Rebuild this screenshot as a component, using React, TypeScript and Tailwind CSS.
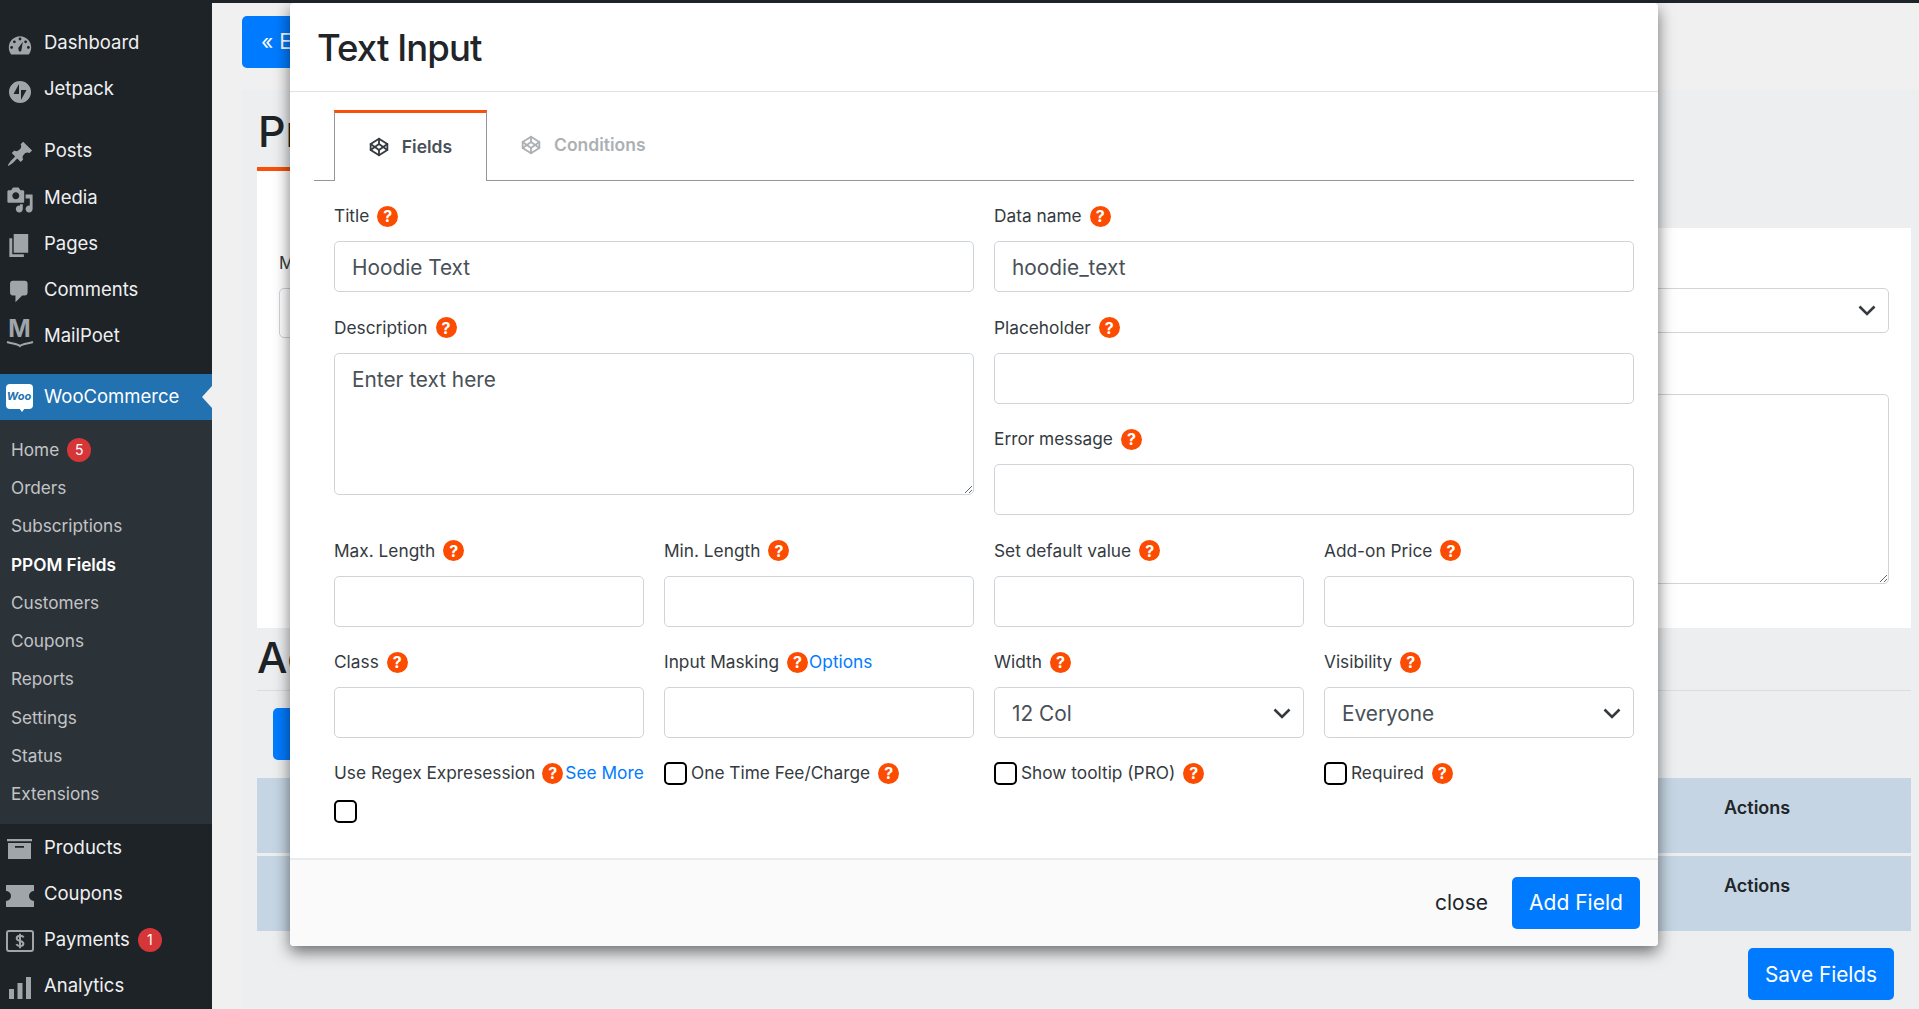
import { Codepen } from "lucide-react"
import type { ReactNode } from "react"

const icons: Record<string, ReactNode> = {
  dashboard: (
    <svg viewBox="0 0 20 20" className="w-[28px] h-[28px] mt-[5px] fill-[#a0a5aa]">
      <path fillRule="evenodd" d="M3.76 16h12.48c1.1-1.37 1.76-3.11 1.76-5 0-4.42-3.58-8-8-8s-8 3.58-8 8c0 1.89.66 3.63 1.76 5zM10 4c.55 0 1 .45 1 1s-.45 1-1 1-1-.45-1-1 .45-1 1-1zM6 6c.55 0 1 .45 1 1s-.45 1-1 1-1-.45-1-1 .45-1 1-1zm8 0c.55 0 1 .45 1 1s-.45 1-1 1-1-.45-1-1 .45-1 1-1zm-5.37 5.55L12 7l-1 6c-.1.55-.45 1-1 1s-1-.45-1-1c0-.57.24-1.08-.37-1.45zM4 10c.55 0 1 .45 1 1s-.45 1-1 1-1-.45-1-1 .45-1 1-1zm12 0c.55 0 1 .45 1 1s-.45 1-1 1-1-.45-1-1 .45-1 1-1z" />
    </svg>
  ),
  jetpack: (
    <svg viewBox="0 0 22 22" className="w-[22px] h-[22px] mt-[5px] fill-[#a0a5aa]">
      <path fillRule="evenodd" d="M11 0a11 11 0 1 0 0 22 11 11 0 0 0 0-22zM10 3v10H4.500zM12 19V9h5.500z" />
    </svg>
  ),
  posts: (
    <svg viewBox="0 0 20 20" className="w-[28px] h-[28px] mt-[5px] fill-[#a0a5aa]">
      <path d="M10.44 3.02l1.82-1.82 6.36 6.35-1.83 1.82c-1.05-.68-2.48-.57-3.41.36l-.75.75c-.92.93-1.04 2.35-.35 3.41l-1.83 1.82-2.41-2.41-2.8 2.79c-.42.42-3.38 2.71-3.8 2.29s1.86-3.39 2.28-3.81l2.79-2.79L4.1 9.36l1.83-1.82c1.05.69 2.48.57 3.4-.36l.75-.75c.93-.92 1.05-2.35.36-3.41z" />
    </svg>
  ),
  media: (
    <svg viewBox="0 0 20 20" className="w-[28px] h-[28px] mt-[5px] fill-[#a0a5aa]">
      <path fillRule="evenodd" d="M13 11V4c0-.55-.45-1-1-1h-1.670L9 1H5L3.670 3H2c-.55 0-1 .45-1 1v7c0 .55.45 1 1 1h10c.55 0 1-.45 1-1zM7 4.500c1.380 0 2.500 1.120 2.500 2.500S8.380 9.500 7 9.500 4.500 8.380 4.500 7 5.620 4.500 7 4.500zM14 6h5v10.500c0 1.380-1.120 2.500-2.500 2.500S14 17.880 14 16.500s1.120-2.500 2.500-2.500c.17 0 .34.02.5.05V9h-3V6zm-4 8.050V13h2v3.500c0 1.380-1.120 2.500-2.500 2.500S7 17.880 7 16.500 8.120 14 9.500 14c.17 0 .34.02.5.05z" />
    </svg>
  ),
  pages: (
    <svg viewBox="0 0 20 20" className="w-[29px] h-[29px] mt-[4px] fill-[#a0a5aa]">
      <path d="M6 15V2h10v13H6zm-1 1h8v2H3V5h2v11z" />
    </svg>
  ),
  comments: (
    <svg viewBox="0 0 20 20" className="w-[27px] h-[27px] mt-[4px] fill-[#a0a5aa]">
      <path d="M5 2h9c1.100 0 2 .9 2 2v7c0 1.100-.9 2-2 2h-2l-5 5v-5H5c-1.100 0-2-.9-2-2V4c0-1.100.9-2 2-2z" />
    </svg>
  ),
  mailpoet: (
    <span className="relative flex flex-col items-center w-[28px] h-[32px] -mt-[4px]">
      <span className="text-[#a0a5aa] text-[24px] leading-[22px] font-bold">M</span>
      <svg viewBox="0 0 28 8" className="w-[28px] h-[8px] stroke-[#a0a5aa] fill-none" strokeWidth={2}>
        <path d="M1 2c5 2 10 1 13 4 3-3 8-2 13-4" />
      </svg>
    </span>
  ),
  woo: (
    <span className="relative flex items-center justify-center w-[27px] h-[25px] -mt-[1px] bg-white rounded-[4px] text-[#2271b1] text-[11px] font-bold italic leading-none">
      Woo
      <span className="absolute -bottom-[3px] left-[13px] w-0 h-0 border-l-[3px] border-r-[3px] border-t-[4px] border-l-transparent border-r-transparent border-t-white" />
    </span>
  ),
  products: (
    <svg viewBox="0 0 25 20" className="w-[25px] h-[20px] mt-[3px] fill-[#a0a5aa]">
      <path fillRule="evenodd" d="M0 0h25v2.300H0zM1 4h23v16H1zM8 7v1.800h9V7z" />
    </svg>
  ),
  coupons: (
    <svg viewBox="0 0 28 24" className="w-[28px] h-[24px] mt-[4px] fill-[#a0a5aa]">
      <path d="M0 1h28v6a5 5 0 0 0 0 10v6H0v-6a5 5 0 0 0 0-10z" />
    </svg>
  ),
  payments: (
    <svg viewBox="0 0 28 22" className="w-[28px] h-[22px] mt-[2px] fill-none stroke-[#a0a5aa]" strokeWidth={2}>
      <rect x="1" y="1" width="26" height="20" rx="2" />
      <path d="M17.500 7.500c-.5-1.300-2-1.800-3.500-1.800-1.800 0-3.300.9-3.300 2.500s1.500 2.300 3.300 2.700 3.400 1 3.400 2.700-1.600 2.500-3.400 2.500c-1.600 0-3-.6-3.600-1.900M14 3.800v14.400" />
    </svg>
  ),
  analytics: (
    <svg viewBox="0 0 22 22" className="w-[22px] h-[22px] mt-[4px] fill-[#a0a5aa]">
      <path d="M0 12h5v10H0zM8.500 6h5v16h-5zM17 0h5v22h-5z" />
    </svg>
  ),
}

const topItems = [
  ["dashboard", "Dashboard"],
  ["jetpack", "Jetpack"],
  null,
  ["posts", "Posts"],
  ["media", "Media"],
  ["pages", "Pages"],
  ["comments", "Comments"],
  ["mailpoet", "MailPoet"],
]

const subItems = [
  "Home",
  "Orders",
  "Subscriptions",
  "PPOM Fields",
  "Customers",
  "Coupons",
  "Reports",
  "Settings",
  "Status",
  "Extensions",
]

function Badge({ n }: { n: number }) {
  return (
    <span className="ml-[8px] w-[24px] h-[24px] rounded-full bg-[#d63638] text-white text-[14px] flex items-center justify-center">
      {n}
    </span>
  )
}

function MenuRow({ icon, label, badge }: { icon: string; label: string; badge?: number }) {
  return (
    <div className="h-[46.600px] flex items-center text-[#f0f0f1] text-[18.500px]">
      <span className="w-[44px] shrink-0 flex justify-center pl-[1px] pr-[6px]">{icons[icon]}</span>
      <span>{label}</span>
      {badge ? <Badge n={badge} /> : null}
    </div>
  )
}

function Sidebar() {
  return (
    <aside className="w-[212px] shrink-0 bg-[#1d2327] flex flex-col pt-[17px]">
      {topItems.map((it, i) =>
        it ? (
          <MenuRow key={i} icon={it[0]} label={it[1]} />
        ) : (
          <div key={i} className="h-[16px]" />
        )
      )}
      <div className="h-[15px]" />
      <div className="relative h-[47px] bg-[#2271b1] flex items-center text-white text-[18.500px]">
        <span className="w-[44px] shrink-0 flex justify-center pr-[6px]">{icons.woo}</span>
        <span>WooCommerce</span>
        <span className="absolute right-0 top-[12px] w-0 h-0 border-y-[11px] border-r-[10px] border-y-transparent border-r-[#f0f0f1]" />
      </div>
      <div className="bg-[#2c3338] pt-[10px] pb-[11px]">
        {subItems.map((s, i) => (
          <div
            key={s}
            className={`h-[38.300px] pl-[11px] flex items-center text-[17.200px] ${
              s === "PPOM Fields" ? "font-semibold text-white" : "text-[#c3c4c7]"
            }`}
          >
            {s}
            {i === 0 ? <Badge n={5} /> : null}
          </div>
        ))}
      </div>
      <MenuRow icon="products" label="Products" />
      <MenuRow icon="coupons" label="Coupons" />
      <MenuRow icon="payments" label="Payments" badge={1} />
      <MenuRow icon="analytics" label="Analytics" />
    </aside>
  )
}

function Help({ className = "" }: { className?: string }) {
  return (
    <span
      className={`inline-flex w-[21px] h-[21px] shrink-0 rounded-full bg-[#fb4c02] text-white text-[16px] font-bold items-center justify-center leading-none ${className}`}
    >
      ?
    </span>
  )
}

function Label({ text, link }: { text: string; link?: string }) {
  return (
    <div className="h-[24px] pt-[2px] mb-[14px] flex items-center whitespace-nowrap text-[17.300px] text-[#343a40]">
      <span>{text}</span>
      <Help className="ml-[8px]" />
      {link ? <a className="ml-[1px] text-[#007bff]">{link}</a> : null}
    </div>
  )
}

const inputCls =
  "block w-full h-[51px] pl-[17px] pr-[17px] pt-[2px] bg-white border border-[#ced4da] rounded-[5px] text-[20.800px] text-[#495057] outline-none"

function Field({ label, value, link }: { label: string; value?: string; link?: string }) {
  return (
    <div className="min-w-0">
      <Label text={label} link={link} />
      <input className={inputCls} defaultValue={value} />
    </div>
  )
}

function Chevron({ className = "" }: { className?: string }) {
  return (
    <svg viewBox="0 0 18 11" className={`w-[18px] h-[11px] fill-none stroke-[#343a40] ${className}`} strokeWidth={2.600}>
      <path d="M1.500 1.500L9 9l7.500-7.500" />
    </svg>
  )
}

function SelectField({ label, value }: { label: string; value: string }) {
  return (
    <div className="min-w-0">
      <Label text={label} />
      <div className={`${inputCls} flex items-center justify-between`}>
        <span>{value}</span>
        <Chevron className="-mr-[5px]" />
      </div>
    </div>
  )
}

function Check({ className = "" }: { className?: string }) {
  return (
    <input
      type="checkbox"
      className={`appearance-none block w-[23px] h-[23px] shrink-0 bg-white border-2 border-black rounded-[5px] ${className}`}
    />
  )
}

function CheckLabel({ text }: { text: string }) {
  return (
    <div className="h-[24px] pt-[1px] flex items-center whitespace-nowrap text-[17.300px] text-[#343a40]">
      <Check className="mr-[4px]" />
      <span>{text}</span>
      <Help className="ml-[8px]" />
    </div>
  )
}

function Modal() {
  return (
    <div className="absolute left-[290px] top-0 w-[1368px] h-[943px] bg-white rounded-[4px] shadow-[0_6px_16px_rgba(0,0,0,0.55)] flex flex-col">
      <header className="h-[89px] shrink-0 border-b border-[#dee2e6] pl-[27px] pt-[2px] flex items-center">
        <h2 className="text-[36.500px] font-medium text-[#212529] tracking-[-0.9px]">Text Input</h2>
      </header>
      <div className="px-[24px] pt-[18px]">
        <div className="h-[71px] border-b border-[#9a9494] pl-[20px] flex">
          <div className="w-[153px] h-[71px] bg-white border-x border-[#9a9494] border-t-[3px] border-t-[#f9500a] flex items-center justify-center gap-[13px] text-[17.500px] font-semibold text-[#495057]">
            <Codepen size={20} strokeWidth={2.200} className="text-[#343a40]" />
            Fields
          </div>
          <div className="pl-[34px] flex items-center gap-[13px] text-[17.500px] font-semibold text-[#adb0b3]">
            <Codepen size={20} strokeWidth={2.200} />
            Conditions
          </div>
        </div>
      </div>
      <div className="pl-[44px] pr-[24px] pt-[22px]">
        <div className="grid grid-cols-2 gap-x-[20px]">
          <div className="flex flex-col gap-y-[22.500px]">
            <Field label="Title" value="Hoodie Text" />
            <div>
              <Label text="Description" />
              <textarea
                className="block w-full h-[142px] px-[17px] py-[10px] bg-white border border-[#ced4da] rounded-[5px] text-[20.800px] text-[#495057] outline-none resize-y"
                defaultValue="Enter text here"
              />
            </div>
          </div>
          <div className="flex flex-col gap-y-[22.500px]">
            <Field label="Data name" value="hoodie_text" />
            <Field label="Placeholder" />
            <Field label="Error message" />
          </div>
        </div>
        <div className="mt-[22.500px] grid grid-cols-4 gap-x-[20px] gap-y-[22.500px]">
          <Field label="Max. Length" />
          <Field label="Min. Length" />
          <Field label="Set default value" />
          <Field label="Add-on Price" />
          <Field label="Class" />
          <Field label="Input Masking" link="Options" />
          <SelectField label="Width" value="12 Col" />
          <SelectField label="Visibility" value="Everyone" />
          <div>
            <div className="h-[24px] pt-[1px] mb-[15px] flex items-center whitespace-nowrap text-[17.300px] text-[#343a40]">
              <span>Use Regex Expresession</span>
              <Help className="ml-[7px]" />
              <a className="ml-[2px] text-[#007bff]">See More</a>
            </div>
            <Check />
          </div>
          <CheckLabel text="One Time Fee/Charge" />
          <CheckLabel text="Show tooltip (PRO)" />
          <CheckLabel text="Required" />
        </div>
      </div>
      <footer className="mt-auto h-[88px] shrink-0 bg-[#fafafa] border-t-2 border-[#e9ecef] rounded-b-[4px] flex items-center justify-end pr-[18px] gap-[24px]">
        <span className="text-[21px] text-[#212529]">close</span>
        <button className="h-[52px] w-[128px] rounded-[5px] bg-[#007bff] text-white text-[21px]">Add Field</button>
      </footer>
    </div>
  )
}

function TableRow() {
  return (
    <div className="h-[75px] bg-[#c5d5e3] pl-[1467px] pt-[16px] text-[18px] font-semibold text-[#212529]">
      Actions
    </div>
  )
}

function Background() {
  return (
    <main className="flex-1 min-w-0 bg-[#f0f0f1] flex flex-col">
      <div className="h-[87px] shrink-0 pl-[30px] pt-[13px]">
        <button className="block h-[52px] w-[150px] rounded-[5px] bg-[#007bff] text-white text-[21px] text-left pl-[19px]">
          « E
        </button>
      </div>
      <div className="flex-1 ml-[30px] pl-[15px] pr-[8px] bg-[#eceef0]">
        <div className="h-[77px] flex items-center pt-[6px] pl-[1px]">
          <h1 className="text-[43px] font-medium text-[#1d2327]">Pr</h1>
        </div>
        <div className="w-[200px] h-[61px] bg-white border-t-4 border-[#f9500a]" />
        <div className="h-[400px] bg-white px-[22px] pt-[23px] flex gap-[20px]">
          <div className="w-[700px]">
            <div className="h-[37px] text-[17px] text-[#343a40]">M</div>
            <div className="h-[50px] border border-[#ced4da] rounded-[5px]" />
          </div>
          <div className="flex-1 pt-[37px]">
            <div className="h-[45px] border border-[#ced4da] rounded-[5px] flex items-center justify-end pr-[12px]">
              <Chevron />
            </div>
            <textarea className="block mt-[61px] w-full h-[190px] border border-[#ced4da] rounded-[5px] bg-white outline-none resize-y" />
          </div>
        </div>
        <div className="h-[63px] border-b border-[#dcdcde] flex items-center pb-[4px]">
          <h2 className="text-[43px] font-medium text-[#1d2327]">Ac</h2>
        </div>
        <div className="pl-[16px] pt-[17px]">
          <button className="block h-[52px] w-[150px] rounded-[5px] bg-[#007bff]" />
        </div>
        <div className="mt-[18px] flex flex-col gap-[3px]">
          <TableRow />
          <TableRow />
        </div>
        <div className="mt-[17px] pr-[17px] flex justify-end">
          <button className="block h-[52px] w-[146px] pt-[1px] rounded-[5px] bg-[#007bff] text-white text-[20.800px]">Save Fields</button>
        </div>
      </div>
    </main>
  )
}

export default function App() {
  return (
    <div className="relative w-[1919px] h-[1009px] overflow-hidden border-t-[3px] border-[#1d2327] flex [font-family:Inter,sans-serif]">
      <Sidebar />
      <Background />
      <Modal />
    </div>
  )
}
